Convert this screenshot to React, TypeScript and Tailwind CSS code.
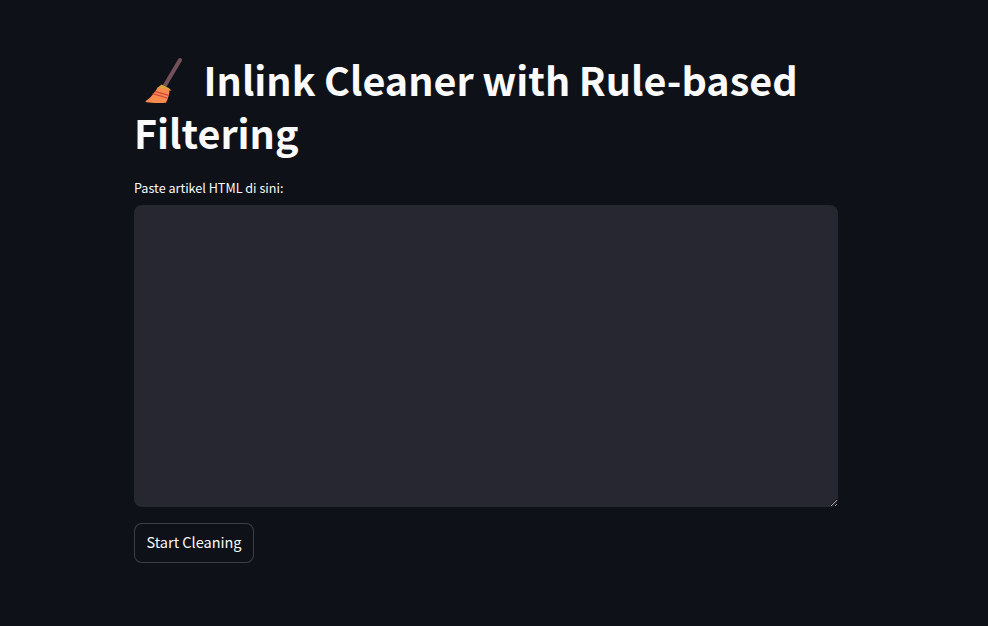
function BroomIcon() {
  return (
    <svg viewBox="0 0 61 56" className="inline-block w-[61px] h-[56px] -my-3 align-[0px]">
      <path d="M46 8 L31 33.3" stroke="#74505a" strokeWidth="4" strokeLinecap="round" fill="none" />
      <path d="M27.7 33.3 L34.3 36.7 L35.3 37.6 L24.3 36 Z" fill="#d9a441" stroke="#d9a441" strokeWidth="1.5" />
      <path d="M24 35.6 L35.6 37.4 C35.4 42 34 47 32 50.7 C26 51.4 17 51.2 11.6 50 C11.4 49.2 12 48.6 13 48 C16 46 17.5 44 19.3 41.7 Z" fill="#f58b4c" />
      <path d="M21 39.3 L34.6 43.3 M18.7 41.7 L33.4 46" stroke="#d9433f" strokeWidth="1.3" fill="none" />
    </svg>
  );
}

export default function App() {
  return (
    <div className="min-h-screen bg-[#0e1117] text-[#fafafa] font-['Noto_Sans_CJK_SC','Noto_Sans',sans-serif]">
      <main className="w-[704px] ml-[134px] pt-[52px] pb-[63px] flex flex-col">
        <h1 className="text-[39.5px] leading-[53px] font-bold mb-[20px] [word-spacing:-0.4px]">
          <BroomIcon /> Inlink Cleaner with Rule-based Filtering
        </h1>
        <label className="text-[12.6px] leading-[20px] mb-[7px]">Paste artikel HTML di sini:</label>
        <textarea className="block w-full h-[302px] resize-y rounded-lg bg-[#262730] outline-none p-4 text-[14px]" />
        <div className="mt-4">
          <button className="h-10 w-[120px] pb-[2px] rounded-lg border border-[#fafafa33] bg-[#0e1117] text-[14.5px] leading-none">
            Start Cleaning
          </button>
        </div>
      </main>
    </div>
  );
}
